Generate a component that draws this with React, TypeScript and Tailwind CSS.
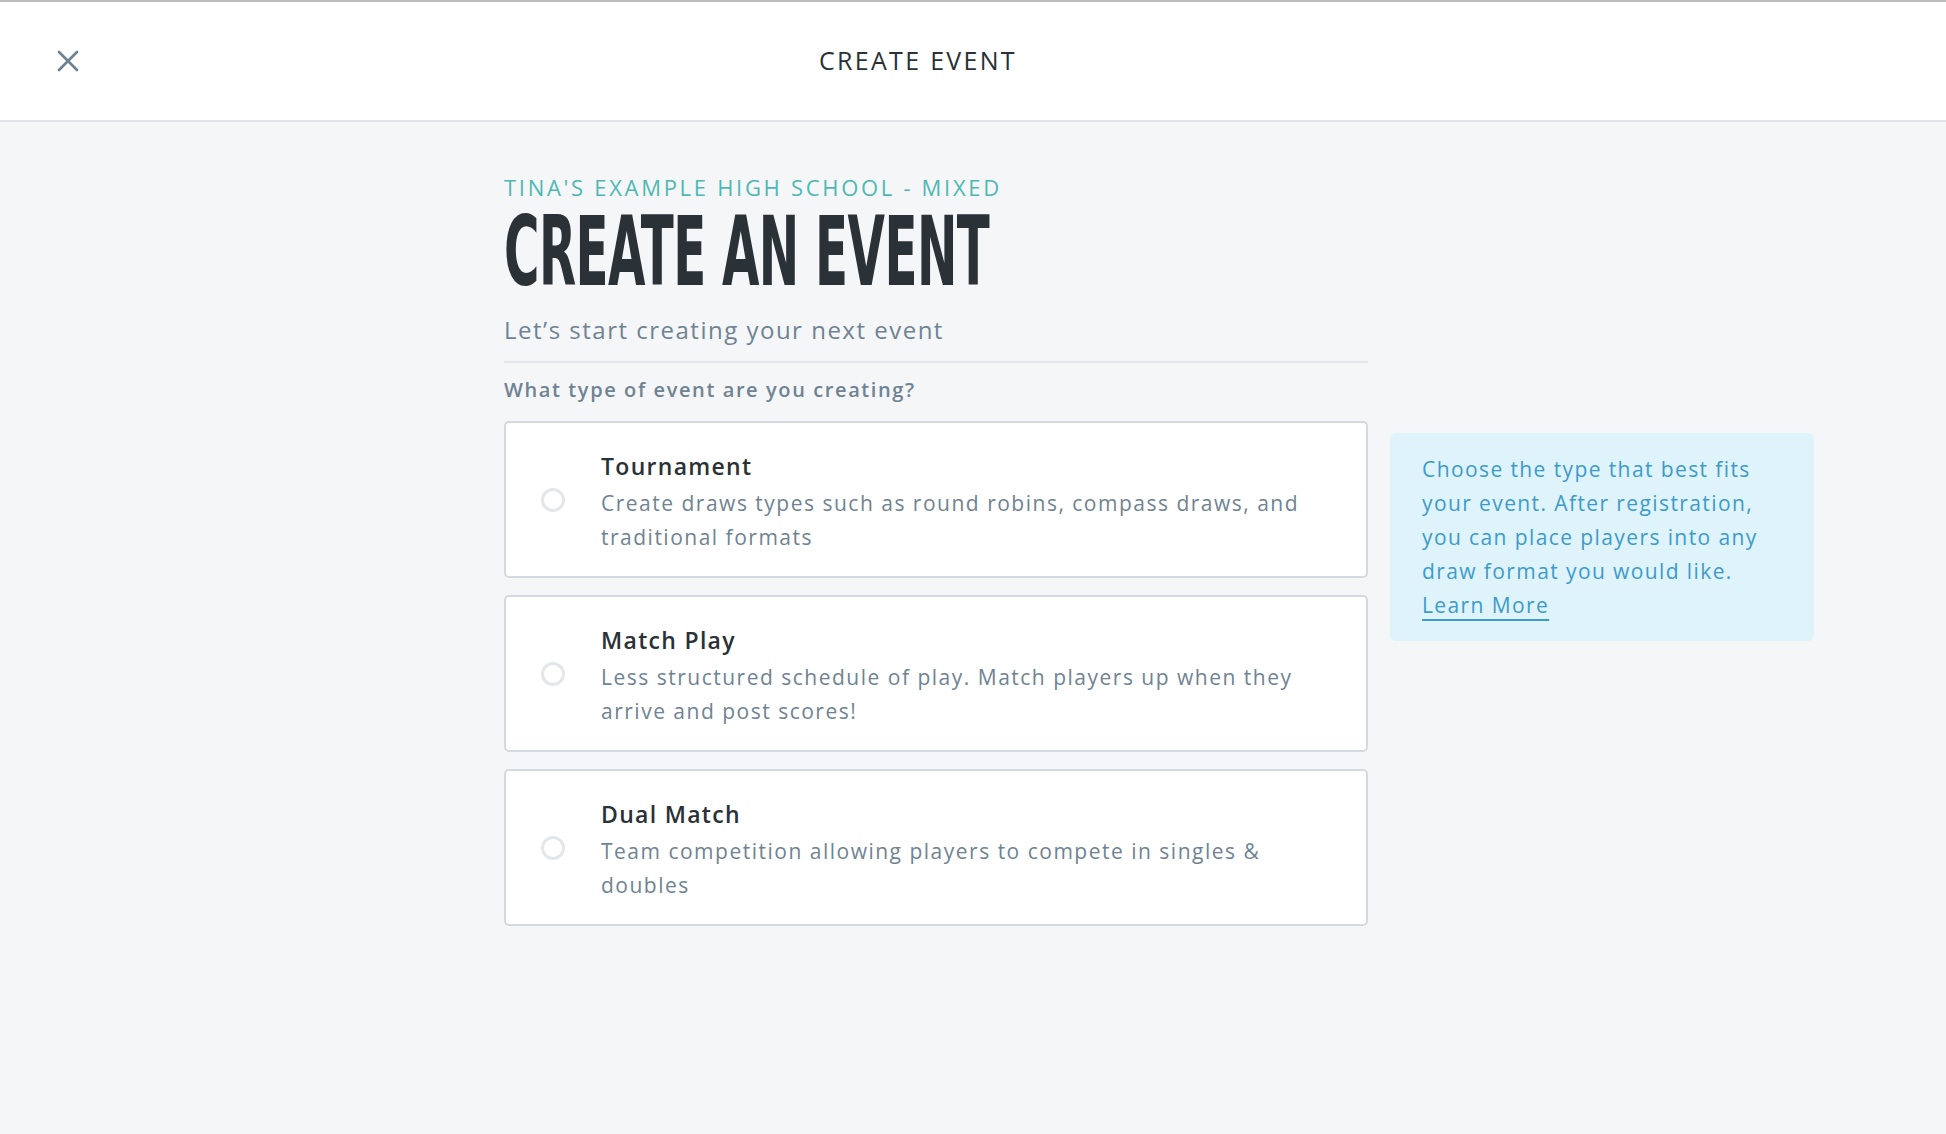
import React, { useState } from 'react';

const EVENT_TYPES = [
  {
    id: 'tournament',
    title: 'Tournament',
    desc: 'Create draws types such as round robins, compass draws, and traditional formats',
  },
  {
    id: 'match-play',
    title: 'Match Play',
    desc: 'Less structured schedule of play. Match players up when they arrive and post scores!',
  },
  {
    id: 'dual-match',
    title: 'Dual Match',
    desc: 'Team competition allowing players to compete in singles & doubles',
  },
];

export default function App() {
  const [selected, setSelected] = useState<string | null>(null);

  return (
    <div className="min-h-screen bg-[#f5f6f8] font-['Open_Sans','Liberation_Sans',sans-serif]">
      {/* top bar */}
      <header className="h-[122px] bg-white border-t-2 border-t-[#bcbcbc] border-b-2 border-b-[#e1e5e9] flex items-center">
        <button className="ml-[57px] w-[22px] h-[22px] flex items-center justify-center text-[#6c8293]">
          <svg width="22" height="22" viewBox="0 0 22 22" fill="none" stroke="currentColor" strokeWidth="2.6" strokeLinecap="round">
            <path d="M2 2L20 20M20 2L2 20" />
          </svg>
        </button>
        <h1 className="ml-[740px] text-[25px] tracking-[2.3px] font-medium text-[#2a3137]">CREATE EVENT</h1>
      </header>

      <main className="flex items-start pl-[504px] pt-[54px]">
        {/* left column */}
        <div className="w-[864px]">
          <p className="text-[22px] leading-[22px] tracking-[2.7px] text-[#4fb8b3]">TINA'S EXAMPLE HIGH SCHOOL - MIXED</p>
          <h2 className="mt-[1px] h-[106px] text-[96px] leading-[106px] font-bold tracking-[-1px] text-[#2a3137] font-['Liberation_Sans_Narrow','DejaVu_Sans_Condensed','Liberation_Sans',sans-serif] origin-left scale-x-[0.56] whitespace-nowrap">
            CREATE AN EVENT
          </h2>
          <p className="mt-[9px] text-[24px] leading-[32px] tracking-[1.5px] text-[#6f8393]">Let’s start creating your next event</p>
          <div className="mt-[15px] h-[2px] bg-[#e3e6ea]" />
          <p className="mt-[13px] text-[20px] leading-[28px] tracking-[1.6px] font-semibold text-[#6f8393]">What type of event are you creating?</p>

          <div className="mt-[17px] flex flex-col gap-[17px]">
            {EVENT_TYPES.map((t) => (
              <label
                key={t.id}
                onClick={() => setSelected(t.id)}
                className="h-[157px] bg-white border-2 border-[#d3d9de] rounded-[5px] flex items-center pl-[35px] pr-[48px] cursor-pointer"
              >
                <span className="shrink-0 w-[24px] h-[24px] rounded-full border-[3px] border-[#e3e7ea] flex items-center justify-center">
                  {selected === t.id && <span className="w-[10px] h-[10px] rounded-full bg-[#4fb8b3]" />}
                </span>
                <div className="ml-[36px] pt-[4px]">
                  <div className="text-[23px] leading-[34px] tracking-[1.3px] font-semibold text-[#2a3137]">{t.title}</div>
                  <div className="mt-[3px] text-[21px] leading-[34px] tracking-[1.5px] text-[#6f8393]">{t.desc}</div>
                </div>
              </label>
            ))}
          </div>
        </div>

        {/* help box */}
        <aside className="ml-[22px] mt-[257px] w-[424px] bg-[#dff3fa] rounded-[6px] px-[32px] py-[19px] text-[21px] leading-[34px] tracking-[1.4px] text-[#3d9bcb]">
          Choose the type that best fits your event. After registration, you can place players into any draw format you would like.{' '}
          <a href="#" className="underline decoration-2 underline-offset-[6px]">Learn More</a>
        </aside>
      </main>
    </div>
  );
}
